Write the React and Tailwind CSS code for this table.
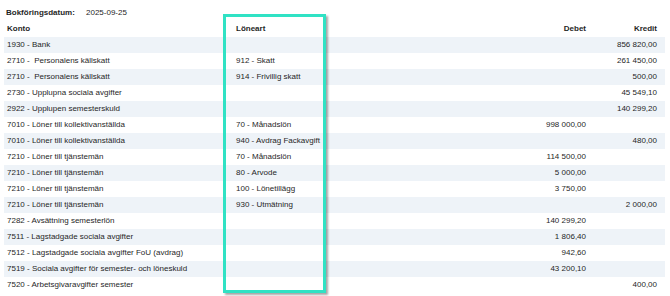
const rows = [
  ["1930 - Bank", "", "", "856 820,00"],
  ["2710 -  Personalens källskatt", "912 - Skatt", "", "261 450,00"],
  ["2710 -  Personalens källskatt", "914 - Frivillig skatt", "", "500,00"],
  ["2730 - Upplupna sociala avgifter", "", "", "45 549,10"],
  ["2922 - Upplupen semesterskuld", "", "", "140 299,20"],
  ["7010 - Löner till kollektivanställda", "70 - Månadslön", "998 000,00", ""],
  ["7010 - Löner till kollektivanställda", "940 - Avdrag Fackavgift", "", "480,00"],
  ["7210 - Löner till tjänstemän", "70 - Månadslön", "114 500,00", ""],
  ["7210 - Löner till tjänstemän", "80 - Arvode", "5 000,00", ""],
  ["7210 - Löner till tjänstemän", "100 - Lönetillägg", "3 750,00", ""],
  ["7210 - Löner till tjänstemän", "930 - Utmätning", "", "2 000,00"],
  ["7282 - Avsättning semesterlön", "", "140 299,20", ""],
  ["7511 - Lagstadgade sociala avgifter", "", "1 806,40", ""],
  ["7512 - Lagstadgade sociala avgifter FoU (avdrag)", "", "942,60", ""],
  ["7519 - Sociala avgifter för semester- och löneskuld", "", "43 200,10", ""],
  ["7520 - Arbetsgivaravgifter semester", "", "", "400,00"],
];

export default function App() {
  return (
    <div className="relative w-[670px] h-[296px] bg-white overflow-hidden text-[#1f1f1f] text-[8px] leading-none" style={{ fontFamily: '"Liberation Sans", Arial, sans-serif' }}>
      <div className="pt-[5px] pl-[4px] pr-[5px]">
        <div className="h-[16px] flex items-center pl-[2px] font-bold">
          <span className="w-[80px]">Bokföringsdatum:</span>
          <span className="font-normal">2025-09-25</span>
        </div>
        <div className="h-[16px] grid grid-cols-[229px_230px_120px_71px] items-center pl-[3px] pr-[8px] font-bold">
          <span>Konto</span>
          <span>Löneart</span>
          <span className="text-right">Debet</span>
          <span className="text-right">Kredit</span>
        </div>
        {rows.map((r, i) => (
          <div
            key={i}
            className={`h-[16px] grid grid-cols-[229px_230px_120px_71px] items-center pl-[3px] pr-[8px] ${i % 2 === 0 ? "bg-[#eef3f8]" : "bg-white"}`}
          >
            <span className="whitespace-pre">{r[0]}</span>
            <span>{r[1]}</span>
            <span className="text-right">{r[2]}</span>
            <span className="text-right">{r[3]}</span>
          </div>
        ))}
      </div>
      <div className="absolute left-[223px] top-[14px] w-[103px] h-[279px] border-[3px] border-[#30e2c4] shadow-[2px_2px_2px_rgba(0,0,0,0.35)] pointer-events-none"></div>
    </div>
  );
}
